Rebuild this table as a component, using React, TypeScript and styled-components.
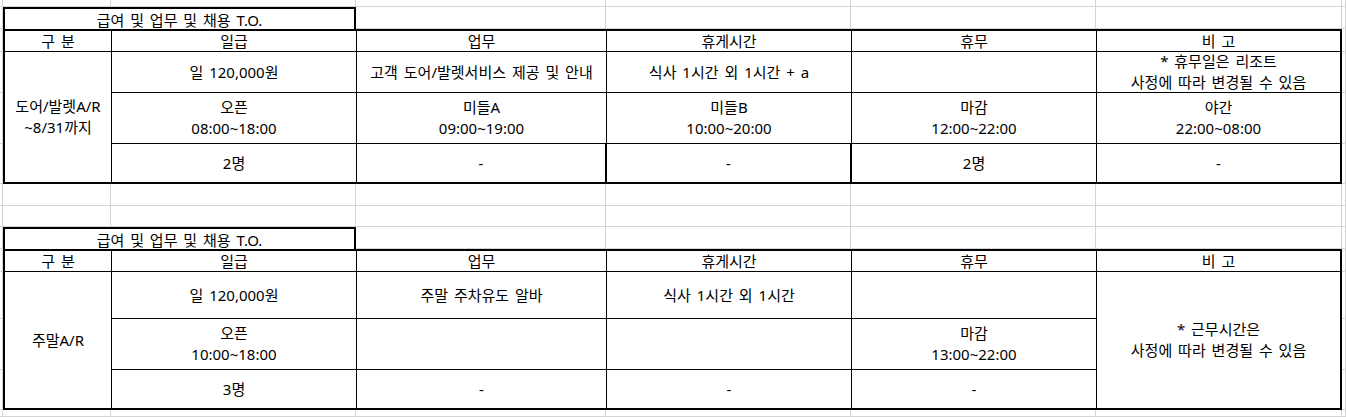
import React from "react";
import styled, { createGlobalStyle } from "styled-components";

const GRID_LINE = "#d4d4d4";

const GlobalStyle = createGlobalStyle`
  html, body {
    margin: 0;
    padding: 0;
    background: #fff;
  }
  body {
    font-family: "Noto Sans", "Noto Sans CJK KR", sans-serif;
    color: #000;
    word-spacing: 2px;
    overflow: hidden;
  }
`;

type CellData = { text: string; span?: number; thick?: boolean };

const HEADERS = ["구 분", "일급", "업무", "휴게시간", "휴무", "비 고"];

// 도어/발렛 table
const doorValet: CellData[] = [
  { text: "도어/발렛A/R\n~8/31까지", span: 3 },
  { text: "일 120,000원" },
  { text: "고객 도어/발렛서비스 제공 및 안내" },
  { text: "식사 1시간 외 1시간 + a" },
  { text: "" },
  { text: "* 휴무일은 리조트\n사정에 따라 변경될 수 있음" },
  { text: "오픈\n08:00~18:00" },
  { text: "미들A\n09:00~19:00" },
  { text: "미들B\n10:00~20:00" },
  { text: "마감\n12:00~22:00" },
  { text: "야간\n22:00~08:00" },
  { text: "2명" },
  { text: "-", thick: true },
  { text: "-", thick: true },
  { text: "2명" },
  { text: "-" },
];

// 주말 table
const weekend: CellData[] = [
  { text: "주말A/R", span: 3 },
  { text: "일 120,000원" },
  { text: "주말 주차유도 알바" },
  { text: "식사 1시간 외 1시간" },
  { text: "" },
  { text: "* 근무시간은\n사정에 따라 변경될 수 있음", span: 3 },
  { text: "오픈\n10:00~18:00" },
  { text: "" },
  { text: "" },
  { text: "마감\n13:00~22:00" },
  { text: "3명" },
  { text: "-" },
  { text: "-" },
  { text: "-" },
];

// 8 sheet columns x 14 sheet rows, minus the cells covered by the two tables
const EMPTY_CELLS = 8 * 14 - (2 + 24) * 2;

const Sheet = styled.div`
  display: grid;
  width: 1346px;
  height: 417px;
  grid-template-columns: 3px 108px 245px 250px 245px 245px 246px 1fr;
  grid-template-rows: 7px 22px 23px 41px 51px 40px 22px 21px 22px 23px 47px 51px 40px 1fr;
  overflow: hidden;
`;

const GridCell = styled.div`
  border-right: 1px solid ${GRID_LINE};
  border-bottom: 1px solid ${GRID_LINE};
`;

const TitleBox = styled.div<{ $row: number }>`
  grid-column: 2 / 4;
  grid-row: ${(p) => p.$row};
  display: flex;
  align-items: center;
  justify-content: center;
  border: 2px solid #000;
  border-bottom: none;
  background: #fff;
  font-size: 15px;
  z-index: 1;
`;

const Body = styled.div<{ $rows: string; $rowTemplate: string }>`
  grid-column: 2 / 8;
  grid-row: ${(p) => p.$rows};
  display: grid;
  grid-template-columns: 107px 245px 250px 245px 245px 1fr;
  grid-template-rows: ${(p) => p.$rowTemplate};
  border-top: 2px solid #000;
  border-left: 2px solid #000;
  border-right: 1px solid #000;
  border-bottom: 1px solid #000;
  background: #fff;
`;

const Cell = styled.div<{ $span?: number; $thick?: boolean }>`
  grid-row: ${(p) => (p.$span ? `span ${p.$span}` : "auto")};
  display: flex;
  align-items: center;
  justify-content: center;
  text-align: center;
  white-space: pre-line;
  font-size: 15px;
  line-height: 21px;
  border-right: ${(p) => (p.$thick ? 2 : 1)}px solid #000;
  border-bottom: 1px solid #000;
`;

const HeadCell = styled(Cell)`
  line-height: 20px;
`;

const Table: React.FC<{ rows: string; rowTemplate: string; cells: CellData[] }> = ({
  rows,
  rowTemplate,
  cells,
}) => (
  <Body $rows={rows} $rowTemplate={rowTemplate}>
    {HEADERS.map((h) => (
      <HeadCell key={h}>{h}</HeadCell>
    ))}
    {cells.map((c, i) => (
      <Cell key={i} $span={c.span} $thick={c.thick}>
        {c.text}
      </Cell>
    ))}
  </Body>
);

export default function App() {
  return (
    <>
      <GlobalStyle />
      <Sheet>
        <TitleBox $row={2}>급여 및 업무 및 채용 T.O.</TitleBox>
        <Table rows="3 / 7" rowTemplate="21px 41px 51px 39px" cells={doorValet} />
        <TitleBox $row={9}>급여 및 업무 및 채용 T.O.</TitleBox>
        <Table rows="10 / 14" rowTemplate="21px 47px 51px 39px" cells={weekend} />
        {Array.from({ length: EMPTY_CELLS }).map((_, i) => (
          <GridCell key={i} />
        ))}
      </Sheet>
    </>
  );
}
